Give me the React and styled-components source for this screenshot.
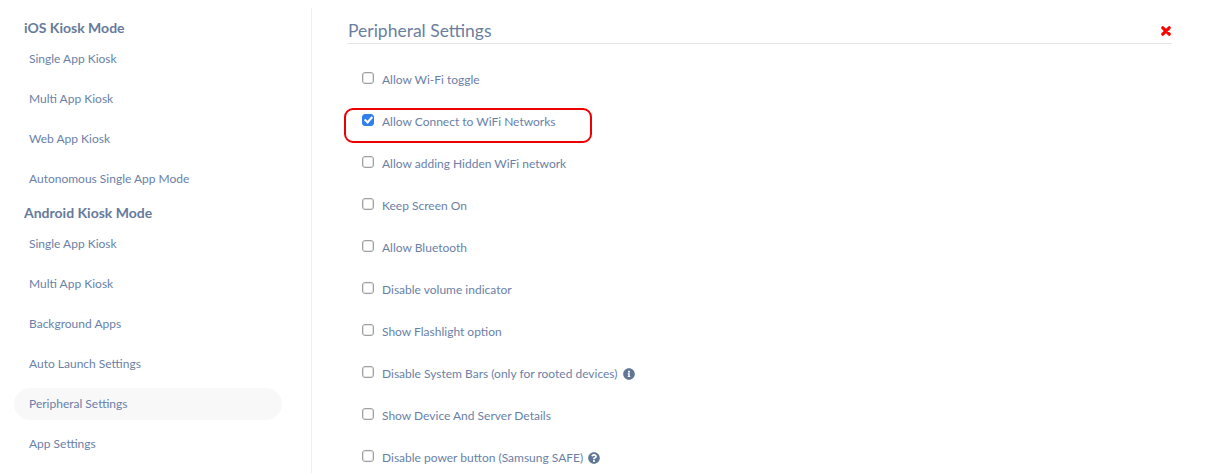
import React from "react";
import styled, { createGlobalStyle } from "styled-components";
import { FaInfoCircle, FaQuestionCircle } from "react-icons/fa";

const Global = createGlobalStyle`
  html, body {
    margin: 0;
    padding: 0;
    background: #fff;
    overflow: hidden;
  }
  body {
    font-family: Lato, "Open Sans", sans-serif;
    color: #6a7fa3;
  }
`;

const Page = styled.div`
  display: flex;
  width: 1222px;
  height: 473px;
  overflow: hidden;
`;

const Sidebar = styled.nav`
  width: 312px;
  height: 465px;
  margin-top: 8px;
  padding: 10px 29px 0 14px;
  box-sizing: border-box;
  border-right: 1px solid #f0f0f0;
  flex-shrink: 0;
`;

const GroupTitle = styled.h4`
  margin: 0 0 5px 10px;
  font-size: 14px;
  line-height: 20px;
  font-weight: 700;
  color: #667a9c;
`;

const NavItem = styled.div`
  height: 32px;
  line-height: 32px;
  margin-bottom: 8px;
  padding-left: 15px;
  font-size: 12px;
  color: #6a7fa8;
  border-radius: 16px;
  background: ${(p) => (p.$active ? "#f8f8f8" : "transparent")};
`;

const Main = styled.main`
  position: relative;
  flex: 1;
  padding: 18px 50px 0 35px;
  box-sizing: border-box;
`;

const Header = styled.div`
  display: flex;
  justify-content: space-between;
  align-items: center;
  height: 25px;
  border-bottom: 1px solid #e6e6e6;
  padding: 0 1px;
`;

const Title = styled.h3`
  margin: 0;
  font-size: 17.5px;
  line-height: 25px;
  font-weight: 400;
  color: #6a7f9f;
`;

const Close = styled.svg`
  width: 10px;
  height: 10px;
  margin-top: 1px;
`;

const Options = styled.div`
  margin-top: 14px;
  padding-left: 15px;
`;

const Row = styled.label`
  display: flex;
  align-items: center;
  height: 42px;
  font-size: 12px;
  color: #6a7fa8;
`;

const Check = styled.input.attrs({ type: "checkbox" })`
  appearance: none;
  position: relative;
  width: 12px;
  height: 12px;
  margin: 0 8px 3px 0;
  flex-shrink: 0;
  box-sizing: border-box;
  background: #fff;
  border: 1px solid #a0a0a0;
  box-shadow: inset 0 0 0 1px #e2e2e2;
  border-radius: 3px;

  &:checked {
    background: #2f80ed;
    border-color: #2f80ed;
    box-shadow: none;
  }

  &:checked::after {
    content: "";
    position: absolute;
    left: 3px;
    top: 0;
    width: 3px;
    height: 6px;
    border: solid #fff;
    border-width: 0 2px 2px 0;
    transform: rotate(42deg);
  }
`;

const Hint = styled.span`
  display: inline-flex;
  margin-left: 5px;
  margin-top: 2px;
  font-size: 12px;
  color: #5f7696;
`;

const Highlight = styled.div`
  position: absolute;
  left: 32px;
  top: 108px;
  width: 248px;
  height: 35px;
  box-sizing: border-box;
  border: 2px solid #ee0000;
  border-radius: 9px;
  pointer-events: none;
`;

const ios = ["Single App Kiosk", "Multi App Kiosk", "Web App Kiosk", "Autonomous Single App Mode"];
const android = [
  "Single App Kiosk",
  "Multi App Kiosk",
  "Background Apps",
  "Auto Launch Settings",
  "Peripheral Settings",
  "App Settings",
];

const options = [
  { label: "Allow Wi-Fi toggle" },
  { label: "Allow Connect to WiFi Networks", checked: true },
  { label: "Allow adding Hidden WiFi network" },
  { label: "Keep Screen On" },
  { label: "Allow Bluetooth" },
  { label: "Disable volume indicator" },
  { label: "Show Flashlight option" },
  { label: "Disable System Bars (only for rooted devices)", hint: <FaInfoCircle /> },
  { label: "Show Device And Server Details" },
  { label: "Disable power button (Samsung SAFE)", hint: <FaQuestionCircle /> },
];

export default function App() {
  return (
    <Page>
      <Global />
      <Sidebar>
        <GroupTitle>iOS Kiosk Mode</GroupTitle>
        {ios.map((item) => (
          <NavItem key={item}>{item}</NavItem>
        ))}
        <GroupTitle>Android Kiosk Mode</GroupTitle>
        {android.map((item) => (
          <NavItem key={item} $active={item === "Peripheral Settings"}>
            {item}
          </NavItem>
        ))}
      </Sidebar>
      <Main>
        <Header>
          <Title>Peripheral Settings</Title>
          <Close viewBox="0 0 10 10">
            <path d="M1.8 1.8l6.4 6.4M8.2 1.8l-6.4 6.4" stroke="#ff0000" strokeWidth="3.2" strokeLinecap="round" />
          </Close>
        </Header>
        <Options>
          {options.map((o) => (
            <Row key={o.label}>
              <Check defaultChecked={o.checked} />
              {o.label}
              {o.hint && <Hint>{o.hint}</Hint>}
            </Row>
          ))}
        </Options>
        <Highlight />
      </Main>
    </Page>
  );
}
